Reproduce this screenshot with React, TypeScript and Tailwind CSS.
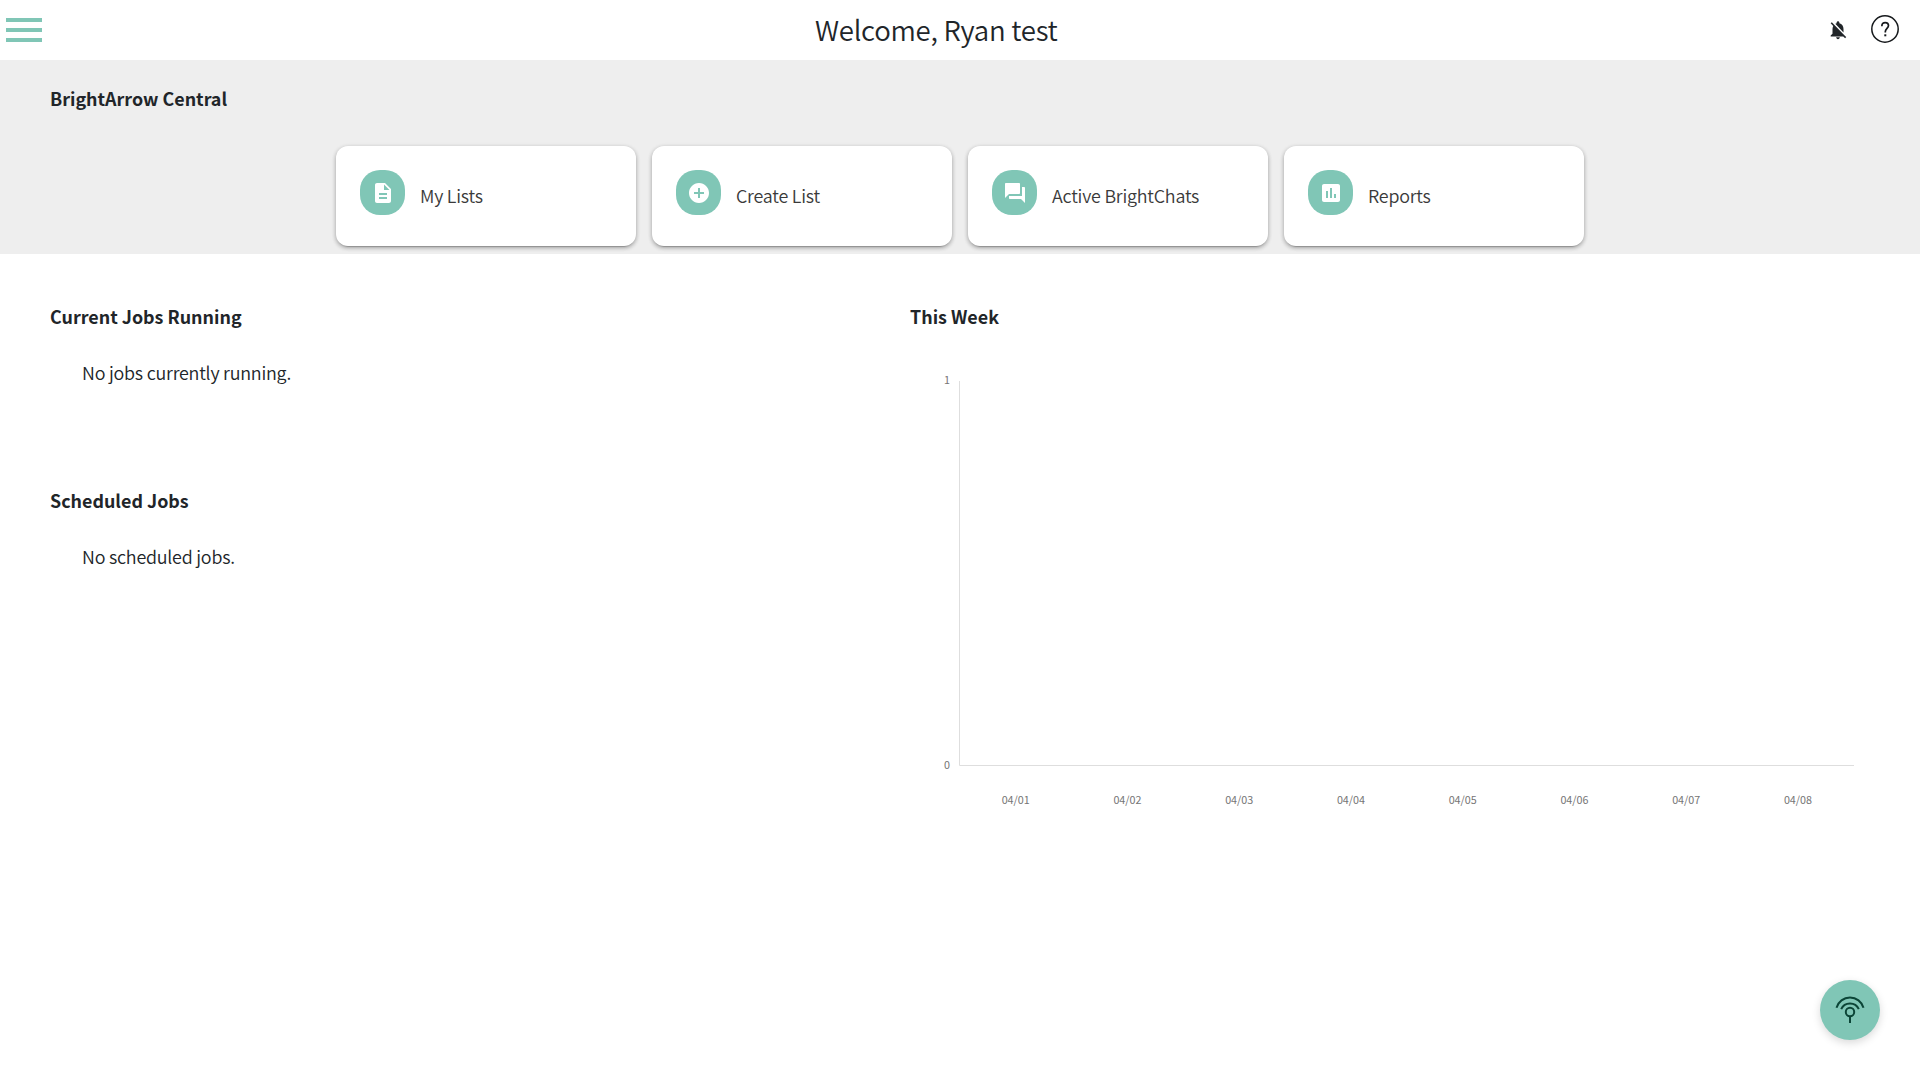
import type { IconType } from "react-icons";
import {
  MdAddCircle,
  MdAssessment,
  MdDescription,
  MdForum,
  MdNotificationsOff,
} from "react-icons/md";

const cards: { label: string; Icon: IconType }[] = [
  { label: "My Lists", Icon: MdDescription },
  { label: "Create List", Icon: MdAddCircle },
  { label: "Active BrightChats", Icon: MdForum },
  { label: "Reports", Icon: MdAssessment },
];

const days = ["04/01", "04/02", "04/03", "04/04", "04/05", "04/06", "04/07", "04/08"];

function HelpIcon() {
  return (
    <svg className="-mt-0.5 size-7" viewBox="0 0 28 28" fill="none" stroke="#16191c">
      <circle cx="14" cy="14" r="13.2" strokeWidth="1.5" />
      <path d="M10.9 11.2V10.7C10.9 8.7 12.2 7.6 14.2 7.6S17.5 8.8 17.5 10.6C17.5 13.3 14.3 13.6 14.3 16.8V17.6" strokeWidth="1.7" />
      <path d="M14.3 19.3V21.3" strokeWidth="2" />
    </svg>
  );
}

function BroadcastIcon() {
  return (
    <svg className="h-[28px] w-[30px]" viewBox="0 0 30 28" fill="none" stroke="#0b4537" strokeWidth="2">
      <path d="M1.5 11.8A14 14 0 0 1 28.5 11.8" />
      <path d="M6.2 13.2A9.6 9.6 0 0 1 23.8 13.2" />
      <circle cx="15" cy="16" r="4.2" />
      <path d="M15 20.2V27" />
    </svg>
  );
}

function WeekChart() {
  return (
    <svg className="block h-[460px] w-[950px]" viewBox="0 0 950 460" fill="#757575">
      <path d="M49.5 21V405.5H944" fill="none" stroke="#dedede" />
      <g fontSize="10.75">
        <text x="40" y="24" textAnchor="end">1</text>
        <text x="40" y="409" textAnchor="end">0</text>
        {days.map((day, i) => (
          <text key={day} x={105.7 + i * 111.75} y="444" textAnchor="middle">
            {day}
          </text>
        ))}
      </g>
    </svg>
  );
}

function Heading({ children }: { children: string }) {
  return <h2 className="text-[17.9px] leading-6 font-bold">{children}</h2>;
}

export default function App() {
  return (
    <div className="flex h-[1080px] w-full flex-col overflow-hidden bg-white font-['Noto_Sans_CJK_JP','Noto_Sans',sans-serif] text-[#212529]">
      <header className="flex h-[60px] shrink-0 items-center pr-[21px] pl-1.5">
        <button aria-label="Menu" className="flex w-[809px] flex-col gap-1.5">
          <span className="h-1 w-9 bg-[#80c6b6]" />
          <span className="h-1 w-9 bg-[#80c6b6]" />
          <span className="h-1 w-9 bg-[#80c6b6]" />
        </button>
        <h1 className="text-[27.6px] leading-[58px] font-[350] tracking-[-0.27px] whitespace-nowrap pb-0.5">Welcome, Ryan test</h1>
        <div className="ml-auto flex items-center gap-[22px]">
          <MdNotificationsOff className="size-[22px]" />
          <HelpIcon />
        </div>
      </header>

      <section className="h-[194px] shrink-0 overflow-hidden bg-[#eee] px-[50px] pt-[26px]">
        <Heading>BrightArrow Central</Heading>
        <div className="mt-9 flex justify-center gap-4">
          {cards.map(({ label, Icon }) => (
            <div
              key={label}
              className="flex h-[100px] w-[300px] items-start rounded-xl bg-white pt-6 pl-6 shadow-[0_3px_1px_-2px_rgba(0,0,0,0.2),0_2px_4px_0_rgba(0,0,0,0.24),0_1px_5px_0_rgba(0,0,0,0.12)]"
            >
              <span className="flex size-[45px] items-center justify-center rounded-[20px] bg-[#80c6b6] text-white">
                <Icon className="size-6" />
              </span>
              <span className="mt-[13px] ml-[15px] text-[17.9px] leading-6 font-[350] tracking-[-0.22px] text-[#3a3a3a]">{label}</span>
            </div>
          ))}
        </div>
      </section>

      <main className="grid grow grid-cols-[860px_1fr] pt-[50px] pl-[50px]">
        <div>
          <Heading>Current Jobs Running</Heading>
          <p className="mt-8 pl-8 text-[17.9px] leading-6 font-[350] tracking-[-0.22px]">No jobs currently running.</p>
          <div className="mt-[104px]">
            <Heading>Scheduled Jobs</Heading>
            <p className="mt-8 pl-8 text-[17.9px] leading-6 font-[350] tracking-[-0.22px]">No scheduled jobs.</p>
          </div>
        </div>
        <div>
          <Heading>This Week</Heading>
          <div className="mt-8">
            <WeekChart />
          </div>
        </div>
      </main>

      <button
        aria-label="Broadcast"
        className="fixed right-10 bottom-10 flex size-[60px] items-center justify-center rounded-full bg-[#80c6b6] shadow-[0_3px_8px_rgba(0,0,0,0.15)]"
      >
        <BroadcastIcon />
      </button>
    </div>
  );
}
